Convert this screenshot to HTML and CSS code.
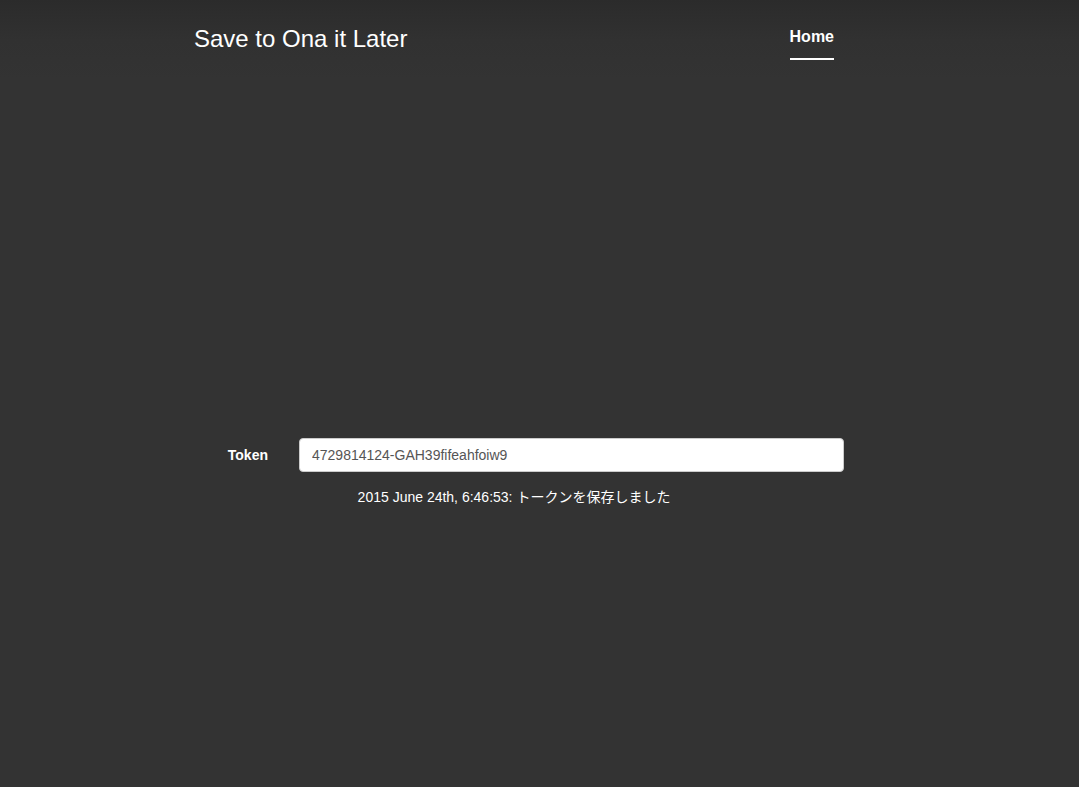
FILE: index.html
```html
<!DOCTYPE html>
<html lang="ja">
<head>
<meta charset="utf-8">
<title>Save to Ona it Later</title>
<link rel="stylesheet" href="styles.css">
</head>
<body>
<div class="page">
  <header class="masthead">
    <h1 class="brand">Save to Ona it Later</h1>
    <nav class="nav">
      <a class="nav-link active" href="#">Home</a>
    </nav>
  </header>
  <main class="content">
    <form class="token-form">
      <label class="token-label" for="token">Token</label>
      <input class="token-input" id="token" type="text" value="4729814124-GAH39fifeahfoiw9">
    </form>
    <p class="status">2015 June 24th, 6:46:53: <span class="ja">トークンを保存しました</span></p>
  </main>
</div>
</body>
</html>
```

FILE: styles.css
```css
html, body {
  margin: 0;
  padding: 0;
  height: 100%;
}
body {
  background: #333333 linear-gradient(#2b2b2b 0, #313131 40px, #333333 80px) no-repeat;
  color: #fff;
  font-family: "Liberation Sans", Arial, "Noto Sans CJK JP", sans-serif;
  font-size: 14px;
}
.page {
  width: 1028px;
  min-height: 100%;
}
.masthead {
  width: 640px;
  margin: 0 auto;
  padding-top: 25px;
  display: flex;
  justify-content: space-between;
  align-items: flex-start;
}
.brand {
  margin: 0;
  font-size: 24px;
  font-weight: normal;
  line-height: 28px;
  color: #fff;
}
.nav {
  display: flex;
}
.nav-link {
  display: block;
  font-size: 16px;
  font-weight: bold;
  line-height: 20px;
  color: rgba(255,255,255,0.75);
  text-decoration: none;
  padding-top: 2px;
  padding-bottom: 11px;
  border-bottom: 2px solid transparent;
}
.nav-link.active {
  color: #fff;
  border-bottom-color: #fff;
}
.content {
  width: 660px;
  margin: 0 auto;
  padding-top: 378px;
}
.token-form {
  display: grid;
  grid-template-columns: 84px 545px;
  column-gap: 31px;
  margin: 0;
}
.token-label {
  text-align: right;
  font-weight: bold;
  line-height: 34px;
  color: #fff;
}
.token-input {
  box-sizing: border-box;
  width: 545px;
  height: 34px;
  margin: 0;
  padding: 6px 12px;
  border: 1px solid #ccc;
  border-radius: 4px;
  background: #fff;
  color: #555;
  font-family: "Liberation Sans", Arial, sans-serif;
  font-size: 14px;
  line-height: 20px;
  outline: none;
}
.status {
  margin: 14px 0 0;
  text-align: center;
  line-height: 20px;
  color: #fff;
}
.ja {
  font-family: "Noto Sans CJK JP", sans-serif;
}
```
